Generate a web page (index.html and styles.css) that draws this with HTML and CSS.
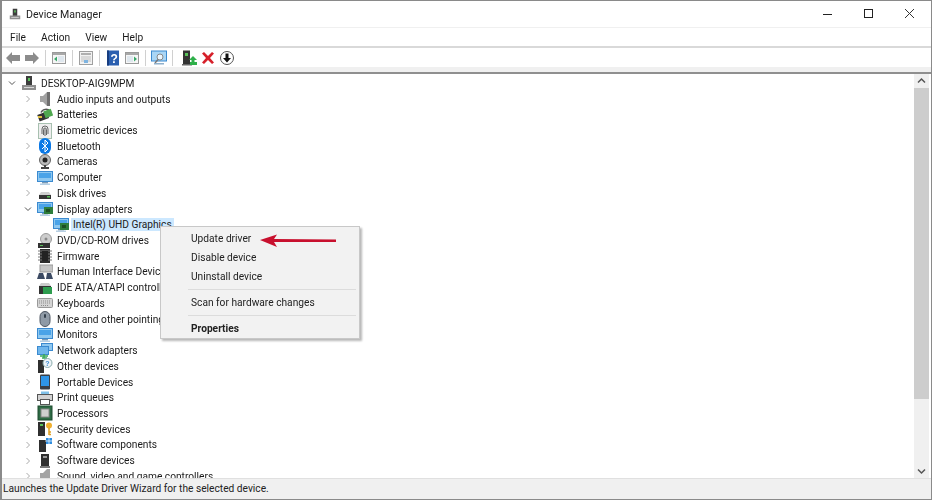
FILE: index.html
```html
<!DOCTYPE html>
<html lang="en">
<head>
<meta charset="utf-8">
<title>Device Manager</title>
<link rel="stylesheet" href="styles.css">
</head>
<body>
<svg class="defs" width="0" height="0">
  <defs>
    <symbol id="pc" viewBox="0 0 16 16">
      <rect x="5" y="1" width="6" height="10" fill="#3d3d3d"/>
      <rect x="7" y="3" width="2" height="3" fill="#5cc25c"/>
      <rect x="1" y="10" width="14" height="5" fill="#8f8f8f"/>
      <rect x="3" y="12" width="10" height="1" fill="#d9d9d9"/>
    </symbol>
    <symbol id="screen" viewBox="0 0 16 16">
      <rect x="0.5" y="1.5" width="15" height="10" fill="#8fc8f0" stroke="#3b8ad0"/>
      <rect x="2" y="3" width="12" height="5" fill="#4aa3e8"/>
      <rect x="5" y="12" width="6" height="1.5" fill="#7a9ab5"/>
      <rect x="3" y="13.5" width="10" height="1.5" fill="#b7cfe3"/>
    </symbol>
  </defs>
</svg>
<div class="window">
  <header class="titlebar">
    <svg class="title-icon" width="12" height="12"><use href="#pc"/></svg>
    <span class="title-text">Device Manager</span>
    <div class="caption">
      <svg class="cap-btn" width="46" height="16" viewBox="0 0 46 16"><path d="M18 8.500h9" stroke="#222" fill="none"/></svg>
      <svg class="cap-btn" width="46" height="16" viewBox="0 0 46 16"><rect x="18.500" y="3.500" width="8" height="8" stroke="#222" fill="none"/></svg>
      <svg class="cap-btn" width="46" height="16" viewBox="0 0 46 16"><path d="M18 3l9 9M27 3l-9 9" stroke="#333" fill="none"/></svg>
    </div>
  </header>
  <nav class="menubar">
    <span>File</span><span>Action</span><span>View</span><span>Help</span>
  </nav>
  <div class="toolbar">
    <svg class="tool" width="16" height="16" viewBox="0 0 16 16"><path d="M1 8l6-6v3h8v6H7v3z" fill="#8c8c8c"/></svg>
    <svg class="tool" width="16" height="16" viewBox="0 0 16 16"><path d="M15 8L9 2v3H1v6h8v3z" fill="#8c8c8c"/></svg>
    <i class="sep"></i>
    <svg class="tool" width="16" height="16" viewBox="0 0 16 16"><rect x="1.500" y="2.500" width="13" height="11" fill="#f6f6f6" stroke="#9a9a9a"/><rect x="2" y="3" width="12" height="2" fill="#a8a8a8"/><rect x="7" y="6" width="6" height="6" fill="#dfe7ee"/><path d="M3 9l3-2.500v5z" fill="#3aa86a"/></svg>
    <i class="sep"></i>
    <svg class="tool" width="16" height="16" viewBox="0 0 16 16"><rect x="1.500" y="1.500" width="13" height="13" fill="#f2f2f2" stroke="#a0a0a0"/><rect x="3" y="3" width="10" height="2" fill="#b0b0b0"/><path d="M3 7h10M3 9h10M3 11h10" stroke="#c0c0c0"/><rect x="6" y="10" width="4" height="3" fill="#7fb4e0"/></svg>
    <i class="sep"></i>
    <svg class="tool" width="16" height="16" viewBox="0 0 16 16"><rect x="2" y="0.500" width="12" height="15" fill="#2a5fb0"/><rect x="2" y="0.500" width="2" height="15" fill="#173d80"/><text x="5.500" y="12.500" class="help-mark">?</text></svg>
    <svg class="tool" width="16" height="16" viewBox="0 0 16 16"><rect x="1.500" y="2.500" width="13" height="11" fill="#f6f6f6" stroke="#9a9a9a"/><rect x="2" y="3" width="12" height="2" fill="#a8a8a8"/><rect x="3" y="6" width="6" height="6" fill="#dfe7ee"/><path d="M10 9l3-2.500v5z" fill="#3aa86a" transform="matrix(-1 0 0 1 23 0)"/></svg>
    <i class="sep"></i>
    <svg class="tool" width="16" height="16" viewBox="0 0 16 16"><rect x="0.500" y="1" width="15" height="10" fill="#a9d6f5" stroke="#3b8ad0"/><circle cx="9" cy="7" r="3" fill="#eaf5fd" stroke="#888"/><path d="M7 9.500L4 13" stroke="#777" stroke-width="1.400"/><rect x="3" y="13" width="10" height="1.500" fill="#8fb0cc"/></svg>
    <i class="sep"></i>
    <div class="tool-group">
      <svg class="tool" width="16" height="16" viewBox="0 0 16 16"><rect x="2" y="0.500" width="7" height="14" fill="#333"/><rect x="4" y="3" width="3" height="3" fill="#58c058"/><rect x="1" y="14" width="10" height="1.500" fill="#666"/><path d="M12 6l4 4h-2.500v2H16v3H9v-3h1.500v-2H8z" fill="#2fb04a"/></svg>
      <svg class="tool" width="16" height="16" viewBox="0 0 16 16"><path d="M2 3.500L4 2l4 4 4-4 2 1.500L10 8l4 4.500-2 1.500-4-4-4 4-2-1.500L6 8z" fill="#d6202a"/></svg>
      <svg class="tool" width="16" height="16" viewBox="0 0 16 16"><circle cx="8" cy="8" r="6.500" fill="#fff" stroke="#555"/><path d="M6.500 3.500h3V8H12l-4 4.500L4 8h2.500z" fill="#111"/></svg>
    </div>
  </div>
  <main class="content">
    <div class="tree">
      <div class="row root"><svg class="chev" width="8" height="8" viewBox="0 0 8 8"><path d="M1 2.500l3 3 3-3" stroke="#555" fill="none"/></svg><svg class="ico" width="16" height="16"><use href="#pc"/></svg><span>DESKTOP-AIG9MPM</span></div>
      <div class="row"><svg class="chev" width="8" height="8" viewBox="0 0 8 8"><path d="M2.500 1l3 3-3 3" stroke="#aaa" fill="none"/></svg><svg class="ico" width="16" height="16" viewBox="0 0 16 16"><path d="M3 5h3l4-4h3v14h-3L6 11H3z" fill="#a3a3a3"/><path d="M10 1h3v14h-3z" fill="#6f6f6f"/></svg><span>Audio inputs and outputs</span></div>
      <div class="row"><svg class="chev" width="8" height="8" viewBox="0 0 8 8"><path d="M2.500 1l3 3-3 3" stroke="#aaa" fill="none"/></svg><svg class="ico" width="16" height="16" viewBox="0 0 16 16"><rect x="1" y="6" width="10" height="7" fill="#333" transform="rotate(-20 6 9)"/><path d="M4 5.500c2-4 7-4 9-1" stroke="#555" fill="none" stroke-width="1.500"/><rect x="7" y="3" width="8" height="7" fill="#4fa84f" transform="rotate(-20 11 6)"/><path d="M1 10h4" stroke="#e0c040" stroke-width="2"/></svg><span>Batteries</span></div>
      <div class="row"><svg class="chev" width="8" height="8" viewBox="0 0 8 8"><path d="M2.500 1l3 3-3 3" stroke="#aaa" fill="none"/></svg><svg class="ico" width="16" height="16" viewBox="0 0 16 16"><rect x="1.500" y="0.500" width="13" height="15" fill="#eee" stroke="#a8c0b0"/><path d="M5 11V6a3 3 0 016 0v5M6.500 12V6.500a1.500 1.500 0 013 0V12M8 6v7" stroke="#666" fill="none"/></svg><span>Biometric devices</span></div>
      <div class="row"><svg class="chev" width="8" height="8" viewBox="0 0 8 8"><path d="M2.500 1l3 3-3 3" stroke="#aaa" fill="none"/></svg><svg class="ico" width="16" height="16" viewBox="0 0 16 16"><rect x="2" y="0" width="12" height="16" rx="6" fill="#0a78e6"/><path d="M5 5l6 6-3 3V2l3 3-6 6" stroke="#fff" fill="none"/></svg><span>Bluetooth</span></div>
      <div class="row"><svg class="chev" width="8" height="8" viewBox="0 0 8 8"><path d="M2.500 1l3 3-3 3" stroke="#aaa" fill="none"/></svg><svg class="ico" width="16" height="16" viewBox="0 0 16 16"><circle cx="8" cy="6" r="5.500" fill="#bbb" stroke="#666"/><circle cx="8" cy="6" r="2.500" fill="#222"/><path d="M4 13h8v2H4z" fill="#444"/><path d="M8 11v2" stroke="#444" stroke-width="2"/></svg><span>Cameras</span></div>
      <div class="row"><svg class="chev" width="8" height="8" viewBox="0 0 8 8"><path d="M2.500 1l3 3-3 3" stroke="#aaa" fill="none"/></svg><svg class="ico" width="16" height="16"><use href="#screen"/></svg><span>Computer</span></div>
      <div class="row"><svg class="chev" width="8" height="8" viewBox="0 0 8 8"><path d="M2.500 1l3 3-3 3" stroke="#aaa" fill="none"/></svg><svg class="ico" width="16" height="16" viewBox="0 0 16 16"><path d="M2 10l2-3h8l2 3z" fill="#d0d0d0"/><rect x="2" y="10" width="12" height="4" fill="#333"/><rect x="10" y="11" width="3" height="1.500" fill="#58c058"/></svg><span>Disk drives</span></div>
      <div class="row"><svg class="chev" width="8" height="8" viewBox="0 0 8 8"><path d="M1 2.500l3 3 3-3" stroke="#555" fill="none"/></svg><svg class="ico" width="16" height="16" viewBox="0 0 16 16"><use href="#screen"/><rect x="7" y="6" width="9" height="7" fill="#2e7d3a"/><rect x="9" y="8" width="4" height="3" fill="#1c4f24"/></svg><span>Display adapters</span></div>
      <div class="row child"><svg class="ico" width="16" height="16" viewBox="0 0 16 16"><use href="#screen"/><rect x="7" y="6" width="9" height="7" fill="#2e7d3a"/><rect x="9" y="8" width="4" height="3" fill="#1c4f24"/></svg><span class="selected">Intel(R) UHD Graphics</span></div>
      <div class="row"><svg class="chev" width="8" height="8" viewBox="0 0 8 8"><path d="M2.500 1l3 3-3 3" stroke="#aaa" fill="none"/></svg><svg class="ico" width="16" height="16" viewBox="0 0 16 16"><circle cx="9" cy="6" r="5.500" fill="#ccc" stroke="#999"/><circle cx="9" cy="6" r="1.500" fill="#888"/><rect x="1" y="10" width="12" height="5" fill="#333"/><rect x="3" y="12" width="3" height="1" fill="#58c058"/></svg><span>DVD/CD-ROM drives</span></div>
      <div class="row"><svg class="chev" width="8" height="8" viewBox="0 0 8 8"><path d="M2.500 1l3 3-3 3" stroke="#aaa" fill="none"/></svg><svg class="ico" width="16" height="16" viewBox="0 0 16 16"><rect x="3" y="1" width="10" height="14" fill="#2b2b2b"/><path d="M1 3h14M1 6h14M1 9h14M1 12h14" stroke="#777"/><rect x="5" y="3" width="6" height="10" fill="#222"/></svg><span>Firmware</span></div>
      <div class="row"><svg class="chev" width="8" height="8" viewBox="0 0 8 8"><path d="M2.500 1l3 3-3 3" stroke="#aaa" fill="none"/></svg><svg class="ico" width="16" height="16" viewBox="0 0 16 16"><rect x="3" y="1" width="13" height="7" fill="#c4c4c4" stroke="#999"/><path d="M0 15l2-6h4l2 6zM9 15l1-6h4l2 6z" fill="#3c4a63"/></svg><span>Human Interface Devices</span></div>
      <div class="row"><svg class="chev" width="8" height="8" viewBox="0 0 8 8"><path d="M2.500 1l3 3-3 3" stroke="#aaa" fill="none"/></svg><svg class="ico" width="16" height="16" viewBox="0 0 16 16"><path d="M2 6l2-3h8l2 3z" fill="#ccc"/><rect x="2" y="6" width="12" height="8" fill="#333"/><rect x="6" y="7" width="9" height="7" fill="#2e9d4f"/></svg><span>IDE ATA/ATAPI controllers</span></div>
      <div class="row"><svg class="chev" width="8" height="8" viewBox="0 0 8 8"><path d="M2.500 1l3 3-3 3" stroke="#aaa" fill="none"/></svg><svg class="ico" width="16" height="16" viewBox="0 0 16 16"><rect x="0.500" y="3.500" width="15" height="9" rx="1" fill="#d4d4d4" stroke="#999"/><path d="M2 6h12M2 8h12M4 10.500h8" stroke="#8d8d8d" stroke-dasharray="1 1"/></svg><span>Keyboards</span></div>
      <div class="row"><svg class="chev" width="8" height="8" viewBox="0 0 8 8"><path d="M2.500 1l3 3-3 3" stroke="#aaa" fill="none"/></svg><svg class="ico" width="16" height="16" viewBox="0 0 16 16"><rect x="3" y="0.500" width="10" height="15" rx="5" fill="#8f9aa6" stroke="#4c5560"/><rect x="7" y="3" width="2" height="4" rx="1" fill="#34404c"/></svg><span>Mice and other pointing devices</span></div>
      <div class="row"><svg class="chev" width="8" height="8" viewBox="0 0 8 8"><path d="M2.500 1l3 3-3 3" stroke="#aaa" fill="none"/></svg><svg class="ico" width="16" height="16"><use href="#screen"/></svg><span>Monitors</span></div>
      <div class="row"><svg class="chev" width="8" height="8" viewBox="0 0 8 8"><path d="M2.500 1l3 3-3 3" stroke="#aaa" fill="none"/></svg><svg class="ico" width="16" height="16" viewBox="0 0 16 16"><rect x="4.500" y="0.500" width="11" height="7" fill="#8fc8f0" stroke="#3b8ad0"/><rect x="0.500" y="3.500" width="11" height="8" fill="#6fb6ec" stroke="#3b8ad0"/><path d="M3 13h8M7 11v4M5 15h5" stroke="#3aa85c" stroke-width="1.500"/></svg><span>Network adapters</span></div>
      <div class="row"><svg class="chev" width="8" height="8" viewBox="0 0 8 8"><path d="M2.500 1l3 3-3 3" stroke="#aaa" fill="none"/></svg><svg class="ico" width="16" height="16" viewBox="0 0 16 16"><rect x="1" y="2" width="6" height="13" fill="#2f2f2f"/><circle cx="10.500" cy="5" r="4.500" fill="#eef3f8" stroke="#8aa"/><text x="8.300" y="8" class="q-mark">?</text></svg><span>Other devices</span></div>
      <div class="row"><svg class="chev" width="8" height="8" viewBox="0 0 8 8"><path d="M2.500 1l3 3-3 3" stroke="#aaa" fill="none"/></svg><svg class="ico" width="16" height="16" viewBox="0 0 16 16"><rect x="3" y="0.500" width="10" height="15" rx="1" fill="#3b3f46"/><rect x="4" y="2" width="8" height="10" fill="#2f95e8"/></svg><span>Portable Devices</span></div>
      <div class="row"><svg class="chev" width="8" height="8" viewBox="0 0 8 8"><path d="M2.500 1l3 3-3 3" stroke="#aaa" fill="none"/></svg><svg class="ico" width="16" height="16" viewBox="0 0 16 16"><rect x="4" y="1.500" width="8" height="3" fill="#7fc0e8"/><rect x="0.500" y="4.500" width="15" height="6" fill="#d2d2d2" stroke="#555"/><rect x="3.500" y="9.500" width="9" height="5" fill="#fff" stroke="#555"/></svg><span>Print queues</span></div>
      <div class="row"><svg class="chev" width="8" height="8" viewBox="0 0 8 8"><path d="M2.500 1l3 3-3 3" stroke="#aaa" fill="none"/></svg><svg class="ico" width="16" height="16" viewBox="0 0 16 16"><rect x="1" y="1" width="14" height="14" fill="#2e6b45" stroke="#1d4a2f"/><rect x="4" y="4" width="8" height="8" fill="#cfcfcf" stroke="#888"/></svg><span>Processors</span></div>
      <div class="row"><svg class="chev" width="8" height="8" viewBox="0 0 8 8"><path d="M2.500 1l3 3-3 3" stroke="#aaa" fill="none"/></svg><svg class="ico" width="16" height="16" viewBox="0 0 16 16"><rect x="1" y="1" width="7" height="14" fill="#2f2f2f"/><rect x="3" y="3" width="3" height="2" fill="#58c058"/><circle cx="12" cy="4.500" r="3" fill="#f0b030"/><path d="M12 7v7M12 11h2M12 13.500h2" stroke="#e0a020" stroke-width="1.500"/></svg><span>Security devices</span></div>
      <div class="row"><svg class="chev" width="8" height="8" viewBox="0 0 8 8"><path d="M2.500 1l3 3-3 3" stroke="#aaa" fill="none"/></svg><svg class="ico" width="16" height="16" viewBox="0 0 16 16"><rect x="2" y="3" width="7" height="12" fill="#2f2f2f"/><rect x="9" y="1" width="6" height="6" fill="#2f8ee0"/><path d="M12 0v8M8 4h8" stroke="#fff" stroke-width="0.700"/></svg><span>Software components</span></div>
      <div class="row"><svg class="chev" width="8" height="8" viewBox="0 0 8 8"><path d="M2.500 1l3 3-3 3" stroke="#aaa" fill="none"/></svg><svg class="ico" width="16" height="16" viewBox="0 0 16 16"><rect x="4" y="1" width="8" height="12" fill="#2f2f2f"/><rect x="6" y="3" width="4" height="2" fill="#9a9a9a"/><rect x="3" y="13" width="10" height="2" fill="#777"/></svg><span>Software devices</span></div>
      <div class="row"><svg class="chev" width="8" height="8" viewBox="0 0 8 8"><path d="M2.500 1l3 3-3 3" stroke="#aaa" fill="none"/></svg><svg class="ico" width="16" height="16" viewBox="0 0 16 16"><path d="M3 5h3l4-4h3v14h-3L6 11H3z" fill="#a3a3a3"/></svg><span>Sound, video and game controllers</span></div>
    </div>
    <div class="scrollbar">
      <svg class="sb-btn" width="14" height="14" viewBox="0 0 14 14"><path d="M3.500 8.500L7 5l3.500 3.500" stroke="#555" stroke-width="1.500" fill="none"/></svg>
      <div class="thumb"></div>
      <div class="track"></div>
      <svg class="sb-btn" width="14" height="14" viewBox="0 0 14 14"><path d="M3.500 5.500L7 9l3.500-3.500" stroke="#555" stroke-width="1.500" fill="none"/></svg>
    </div>
  </main>
  <footer class="statusbar">Launches the Update Driver Wizard for the selected device.</footer>
  <div class="context-menu">
    <div class="mi">Update driver</div>
    <div class="mi">Disable device</div>
    <div class="mi">Uninstall device</div>
    <hr>
    <div class="mi">Scan for hardware changes</div>
    <hr>
    <div class="mi strong">Properties</div>
  </div>
  <svg class="arrow" width="80" height="16" viewBox="0 0 80 16"><path d="M0 7L17 1.500 14 6 76 6.500V9L14 9 17 14z" fill="#c8102e"/></svg>
</div>
</body>
</html>
```

FILE: styles.css
```css
* { box-sizing: border-box; }
html, body { margin: 0; padding: 0; }
body { width: 932px; height: 500px; overflow: hidden; background: #fff; font-family: Roboto, "Open Sans", sans-serif; font-size: 10.200px; color: #1a1a1a; }
.defs { position: absolute; }
.window { position: relative; width: 932px; height: 500px; display: flex; flex-direction: column; border-top: 1px solid #8a8a8a; border-left: 2px solid #8a8a8a; border-right: 1px solid #8a8a8a; border-bottom: 1px solid #8a8a8a; background: #fff; filter: blur(0.25px); }
.titlebar { height: 26px; display: flex; align-items: center; padding-left: 7px; flex: none; }
.title-icon { margin-right: 5px; }
.title-text { font-size: 10.600px; color: #222; }
.caption { margin-left: auto; display: flex; align-items: center; margin-right: -2px; }
.cap-btn { display: block; margin-left: -5px; }
.menubar { height: 19px; flex: none; display: flex; align-items: center; border-top: 1px solid #f0f0f0; padding-left: 8px; gap: 15px; }
.toolbar { height: 21px; flex: none; display: flex; align-items: center; border-top: 2px solid #d9d9d9; padding-left: 3px; gap: 3px; }
.tool { display: block; flex: none; }
.tool-group { display: flex; gap: 3px; margin-left: 3px; }
.sep { display: block; width: 1px; height: 16px; background: #d0d0d0; margin: 0 2px; }
.help-mark { font: bold 12px "Liberation Sans", sans-serif; fill: #fff; }
.q-mark { font: bold 7px "Liberation Sans", sans-serif; fill: #3b8ad0; }
.content { flex: 1; min-height: 0; display: flex; border-top: 2px solid #8f8f8f; box-shadow: 0 -5px 0 #f0f0f0; margin-top: 5px; }
.tree { flex: 1; min-width: 0; overflow: hidden; padding-top: 1.500px; }
.row { height: 15.720px; display: flex; align-items: center; padding-left: 22px; white-space: nowrap; }
.row.root { padding-left: 6px; }
.row.child { padding-left: 51px; }
.chev { display: block; flex: none; margin-right: 5px; }
.ico { display: block; flex: none; margin-right: 4px; }
.selected { background: #cce8ff; padding: 1px 2px; margin-left: -2px; }
.scrollbar { width: 15px; margin-right: 2px; flex: none; display: flex; flex-direction: column; background: #f0f0f0; }
.sb-btn { display: block; flex: none; height: 14px; width: 15px; }
.thumb { height: 311px; background: #cdcdcd; flex: none; }
.track { flex: 1; }
.statusbar { height: 21px; flex: none; background: #f0f0f0; border-top: 1px solid #e0e0e0; padding-left: 1px; line-height: 20px; color: #222; }
.context-menu { position: absolute; left: 158px; top: 225px; width: 200px; height: 113px; background: #f2f2f2; border: 1px solid #c8c8c8; box-shadow: 2px 2px 2px rgba(0,0,0,.28); padding: 2px 2px 0; color: #222; }
.mi { height: 19px; line-height: 19px; padding-left: 28px; }
.context-menu hr { height: 1px; border: 0; background: #dcdcdc; margin: 3px 1px 3px 25px; }
.mi.strong { font-weight: 700; }
.arrow { position: absolute; left: 258px; top: 232px; }
```
